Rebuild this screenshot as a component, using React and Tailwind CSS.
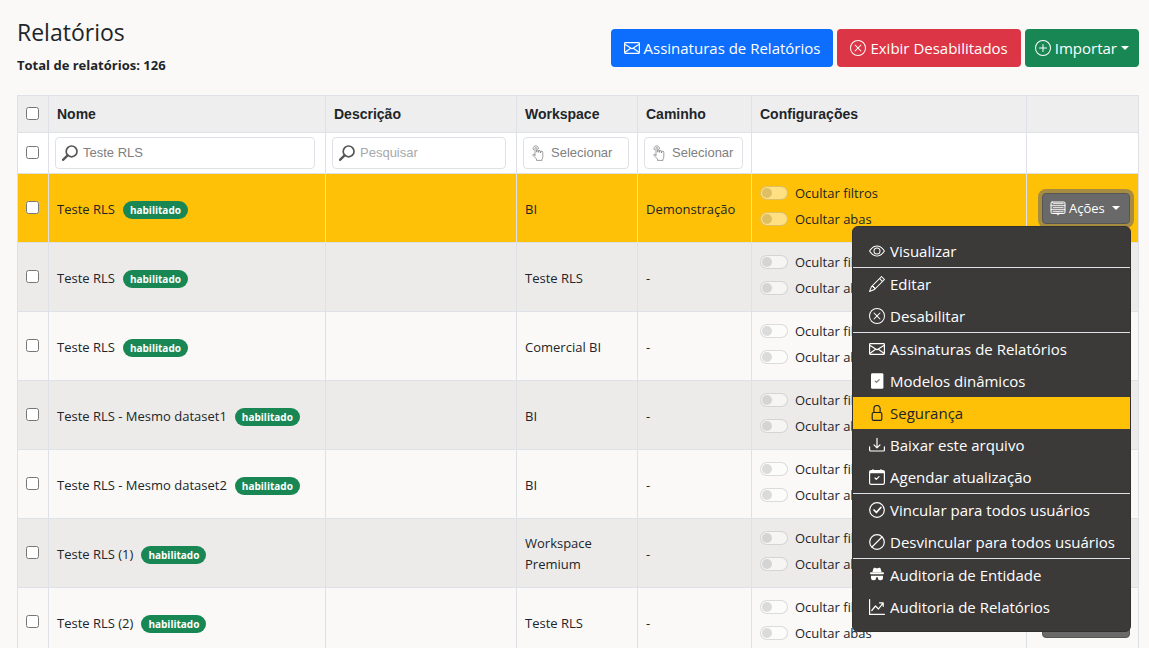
import { Fragment } from "react";
import { BsEye, BsPencil, BsXCircle, BsPlusCircle } from "react-icons/bs";

function Glyph({ children, className = "size-4" }) {
  return (
    <svg
      viewBox="0 0 16 16"
      className={`shrink-0 ${className}`}
      fill="none"
      stroke="currentColor"
      strokeWidth="1.2"
      strokeLinecap="round"
      strokeLinejoin="round"
      aria-hidden="true"
    >
      {children}
    </svg>
  );
}

const Envelope = () => (
  <Glyph>
    <rect x="0.6" y="2.6" width="14.8" height="10.8" rx="0.8" />
    <path d="M0.7 4.2 8 8.7l7.3-4.5M0.7 12.4l5.6-3.9M15.3 12.4 9.7 8.5" />
  </Glyph>
);

const FileCheck = () => (
  <Glyph>
    <rect x="2" y="0.2" width="12.4" height="15.6" rx="1.4" fill="currentColor" stroke="none" />
    <path d="M6.2 8.200l1.300 1.100 2.700-2.600" className="stroke-[#8a8475]" />
  </Glyph>
);

const Lock = () => (
  <Glyph>
    <rect x="3.2" y="7.5" width="9.6" height="7.900" rx="1.4" />
    <path d="M4.9 7.5V3.6a3.1 3.1 0 0 1 6.2 0v3.9" />
  </Glyph>
);

const Download = () => (
  <Glyph>
    <path d="M0.6 9.8v3.2a1 1 0 0 0 1 1h12.8a1 1 0 0 0 1-1V9.8M8 1.400v9M5 7.900l3 3 3-3" />
  </Glyph>
);

const CalendarCheck = () => (
  <Glyph>
    <rect x="0.6" y="1.6" width="14.8" height="13.8" rx="1.6" />
    <path d="M1 2.5h14v1.2H1z" fill="currentColor" />
    <path d="M4 0.6v1.2M12 0.6v1.2M6 9l1.300 1.300 2.700-2.700" />
  </Glyph>
);

const CheckCircle = () => (
  <Glyph>
    <circle cx="8" cy="8" r="7.300" />
    <path d="M5 8l2.4 2.5 4.4-5" strokeWidth="1.7" />
  </Glyph>
);

const SlashCircle = () => (
  <Glyph>
    <circle cx="8" cy="8" r="7.300" />
    <path d="M3 13 13 3" />
  </Glyph>
);

const Spy = () => (
  <Glyph>
    <g fill="currentColor" stroke="none">
      <path d="M4.6 1.2C5 .6 5.8.6 6.4.9c1 .5 2.2.5 3.2 0 .6-.3 1.400-.3 1.800.3.6 1 .9 2.400 1.100 3.900H3.500c.2-1.500.5-2.900 1.100-3.900z" />
      <rect x="1" y="5.300" width="14" height="2" rx="1" />
      <path d="M2 8.700h12v2.300a2.300 2.300 0 0 1-2.300 2.300h-.7A2.300 2.300 0 0 1 8.900 11l-.2-.7H7.300L7.100 11A2.300 2.300 0 0 1 5 13.300h-.7A2.300 2.300 0 0 1 2 11z" />
    </g>
  </Glyph>
);

const Graph = () => (
  <Glyph>
    <path d="M0.6 0.6v14.800h14.800M2.800 11.500l3.700-4.500 3 3L14 4.200M10.500 3.800h3.700v3.500" />
  </Glyph>
);

const Panel = () => (
  <Glyph>
    <rect x="1" y="2" width="14" height="11.500" rx="1.200" strokeWidth="1" className="fill-white/20" />
    <path d="M1 5.500h14M1 9.500h14M3.500 3.500h9.500M3.500 7.500h9.500M3.500 11.500h9.500" strokeWidth="0.7" />
    <path d="M6.500 13.600 8 15.200l1.500-1.600z" strokeWidth="0.8" />
  </Glyph>
);

const Magnifier = () => (
  <svg viewBox="0 0 16 16" className="size-4 shrink-0" fill="none" stroke="#555" aria-hidden="true">
    <circle cx="9.600" cy="6.400" r="5.400" strokeWidth="1.700" />
    <path d="M5.600 10.400 1 14.800" strokeWidth="2.300" strokeLinecap="round" />
  </svg>
);

const TapHand = () => (
  <svg
    viewBox="0 0 12 16"
    className="h-4 w-3 shrink-0"
    fill="none"
    stroke="#777"
    strokeWidth="0.7"
    strokeLinecap="round"
    strokeLinejoin="round"
    aria-hidden="true"
  >
    <path d="M1.300 4.900A2.800 2.800 0 1 1 6.600 3.600" />
    <path d="M3 10.400V3.400a.9.9 0 0 1 1.800 0v3.800V5.800a.9.9 0 0 1 1.900 0v1.600-.9a.9.9 0 0 1 1.900 0v1.500-.8a.9.9 0 0 1 2.200.2v4.500c0 1-.3 1.700-.8 2.200v1.300H4.500V14L1 10.400c-.6-.8.300-1.600 1-1.100z" />
  </svg>
);

const Caret = () => (
  <span className="inline-block border-x-4 border-t-4 border-x-transparent border-t-white" />
);

const menuGroups = [
  [{ icon: <BsEye />, label: "Visualizar" }],
  [
    { icon: <BsPencil />, label: "Editar" },
    { icon: <BsXCircle />, label: "Desabilitar" },
  ],
  [
    { icon: <Envelope />, label: "Assinaturas de Relatórios" },
    { icon: <FileCheck />, label: "Modelos dinâmicos" },
    { icon: <Lock />, label: "Segurança", active: true },
    { icon: <Download />, label: "Baixar este arquivo" },
    { icon: <CalendarCheck />, label: "Agendar atualização" },
  ],
  [
    { icon: <CheckCircle />, label: "Vincular para todos usuários" },
    { icon: <SlashCircle />, label: "Desvincular para todos usuários" },
  ],
  [
    { icon: <Spy />, label: "Auditoria de Entidade" },
    { icon: <Graph />, label: "Auditoria de Relatórios" },
  ],
];

const reports = [
  { name: "Teste RLS", workspace: "BI", path: "Demonstração", open: true },
  { name: "Teste RLS", workspace: "Teste RLS", path: "-" },
  { name: "Teste RLS", workspace: "Comercial BI", path: "-" },
  { name: "Teste RLS - Mesmo dataset1", workspace: "BI", path: "-" },
  { name: "Teste RLS - Mesmo dataset2", workspace: "BI", path: "-" },
  { name: "Teste RLS (1)", workspace: "Workspace Premium", path: "-" },
  { name: "Teste RLS (2)", workspace: "Teste RLS", path: "-" },
];

const headings = ["Nome", "Descrição", "Workspace", "Caminho", "Configurações", ""];

function Tick({ label }) {
  return <input type="checkbox" aria-label={label} className="ml-2 mb-0.5 block size-[13px]" />;
}

function Toggle({ label }) {
  return (
    <label className="mb-[5px] flex h-[21px] items-center gap-[7px]">
      <input
        type="checkbox"
        role="switch"
        disabled
        className="flex h-3.5 w-7 shrink-0 appearance-none items-center rounded-full border border-black/25 bg-white px-px opacity-50 before:size-2.5 before:rounded-full before:bg-black/25"
      />
      <span className="pt-0.5 whitespace-nowrap">{label}</span>
    </label>
  );
}

function SearchBox({ label, placeholder, value }) {
  return (
    <label className="flex h-8 items-center gap-[5px] rounded border border-[#dee2e6] bg-white px-1.5 font-['Liberation_Sans',sans-serif]">
      <Magnifier />
      <input
        type="text"
        aria-label={label}
        placeholder={placeholder}
        defaultValue={value}
        className="w-full min-w-0 bg-transparent text-[13px] text-[#808080] outline-none placeholder:text-[#a6a9ac]"
      />
    </label>
  );
}

function Picker({ label }) {
  return (
    <label className="flex h-8 items-center gap-[7px] rounded border border-[#dee2e6] bg-white pl-2 font-['Liberation_Sans',sans-serif]">
      <TapHand />
      <select
        aria-label={label}
        className="w-full min-w-0 appearance-none bg-transparent text-[13px] text-[#808080] outline-none"
      >
        <option>Selecionar</option>
      </select>
    </label>
  );
}

function ActionMenu() {
  return (
    <div
      role="menu"
      className="absolute top-full -right-px z-10 mt-0.5 w-[279px] rounded-md border border-[#31302f] bg-[#3b3a39] py-2 text-[15px] text-white"
    >
      {menuGroups.map((group, index) => (
        <Fragment key={index}>
          {index > 0 && <hr className="border-t border-[#dee2e6]" />}
          {group.map((item) => (
            <button
              key={item.label}
              type="button"
              role="menuitem"
              className={`flex h-8 w-full items-center gap-[5px] pl-4 text-left whitespace-nowrap [&>svg]:size-4 [&>svg]:shrink-0 ${
                item.active ? "bg-[#ffc107] text-[#212529]" : ""
              }`}
            >
              {item.icon}
              <span className="pt-0.5">{item.label}</span>
            </button>
          ))}
        </Fragment>
      ))}
    </div>
  );
}

function Actions({ open }) {
  return (
    <div className="relative">
      <button
        type="button"
        aria-expanded={Boolean(open)}
        className={`flex h-[31px] w-full items-center gap-[3px] rounded border border-[#565655] bg-[#696969] px-[7px] text-[13px] text-white ${
          open ? "ring-4 ring-[#696969]/60" : ""
        }`}
      >
        <Panel />
        <span className="mr-1 pt-0.5">Ações</span>
        <Caret />
      </button>
      {open && <ActionMenu />}
    </div>
  );
}

const topButton = "flex h-[38px] items-center gap-1 rounded text-[15px] whitespace-nowrap text-white";

export default function App() {
  return (
    <main className="min-h-screen bg-[#faf9f8] pr-2.5 pl-[17px] font-['Open_Sans','Noto_Sans',sans-serif] text-[13px] text-[#212529]">
      <header className="flex h-[95px] items-start justify-between">
        <div className="pt-[17px]">
          <h1 className="text-[23px] leading-[30px] font-medium">Relatórios</h1>
          <p className="mt-2 text-[13px] leading-[21px] font-bold">Total de relatórios: 126</p>
        </div>
        <div className="flex gap-1 pt-[29px]">
          <button type="button" className={`${topButton} bg-[#0d6efd] px-[13px]`}>
            <Envelope />
            Assinaturas de Relatórios
          </button>
          <button type="button" className={`${topButton} bg-[#dc3545] px-[13px]`}>
            <BsXCircle className="size-4" />
            Exibir Desabilitados
          </button>
          <button type="button" className={`${topButton} bg-[#198754] px-2.5`}>
            <BsPlusCircle className="size-4" />
            Importar
            <Caret />
          </button>
        </div>
      </header>

      <table className="w-full table-fixed border-collapse [&_td]:border [&_td]:border-[#dee2e6] [&_th]:border [&_th]:border-[#dee2e6]">
        <colgroup>
          <col className="w-[31px]" />
          <col className="w-[277px]" />
          <col className="w-[191px]" />
          <col className="w-[121px]" />
          <col className="w-[114px]" />
          <col className="w-[275px]" />
          <col className="w-[112px]" />
        </colgroup>
        <thead>
          <tr className="h-[37px] bg-[#eeeeee] text-left font-['Liberation_Sans',sans-serif] text-sm">
            <th>
              <Tick label="Selecionar todos" />
            </th>
            {headings.map((heading, index) => (
              <th key={index} className="px-2 font-bold">
                {heading}
              </th>
            ))}
          </tr>
          <tr className="h-[41px] bg-white">
            <td>
              <Tick label="Selecionar filtrados" />
            </td>
            <td className="pr-2.5 pl-1.5">
              <SearchBox label="Nome" placeholder="Pesquisar" value="Teste RLS" />
            </td>
            <td className="pr-2.5 pl-1.5">
              <SearchBox label="Descrição" placeholder="Pesquisar" />
            </td>
            <td className="pr-2 pl-1.5">
              <Picker label="Workspace" />
            </td>
            <td className="pr-2 pl-1.5">
              <Picker label="Caminho" />
            </td>
            <td />
            <td />
          </tr>
        </thead>
        <tbody>
          {reports.map((report, index) => (
            <tr
              key={index}
              className={`h-[69px] ${report.open ? "bg-[#ffc107]" : index % 2 ? "bg-[#edebea]" : "bg-[#faf9f8]"}`}
            >
              <td>
                <Tick label={report.name} />
              </td>
              <td className="px-2 pt-1">
                <div className="flex items-center gap-2">
                  <span>{report.name}</span>
                  <span className="flex h-[18px] items-center rounded-full bg-[#198754] px-[7px] text-[10px] font-bold text-white">
                    habilitado
                  </span>
                </div>
              </td>
              <td />
              <td className="px-2 pt-0.5 leading-[21px]">{report.workspace}</td>
              <td className="px-2 pt-0.5 leading-[21px]">{report.path}</td>
              <td className="px-2">
                <Toggle label="Ocultar filtros" />
                <Toggle label="Ocultar abas" />
              </td>
              <td className="pr-2 pl-[15px]">
                <Actions open={report.open} />
              </td>
            </tr>
          ))}
        </tbody>
      </table>
    </main>
  );
}
